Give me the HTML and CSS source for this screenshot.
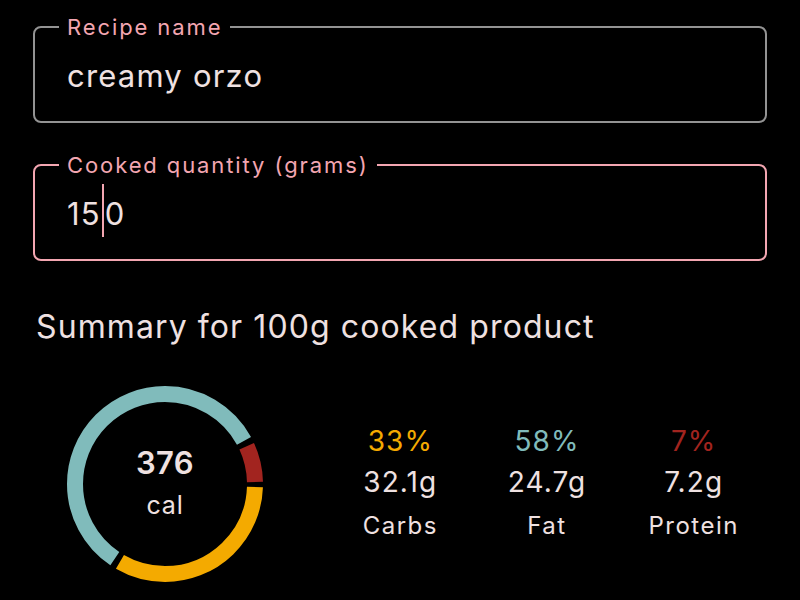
FILE: index.html
```html
<!DOCTYPE html>
<html lang="en">
<head>
    <meta charset="UTF-8">
    <meta name="viewport" content="width=device-width, initial-scale=1.0">
    <title>Recipe</title>
    <link rel="stylesheet" href="styles.css">
</head>
<body>
    <div class="page">
        <fieldset class="field">
            <legend>Recipe name</legend>
            <div class="value">creamy orzo</div>
        </fieldset>

        <fieldset class="field focused">
            <legend>Cooked quantity (grams)</legend>
            <div class="value">15<span class="caret"></span>0</div>
        </fieldset>

        <h2 class="summary-title">Summary for 100g cooked product</h2>

        <div class="summary">
            <div class="chart">
                <svg width="200" height="200" viewBox="0 0 200 200">
                    <circle class="slice carbs" cx="100" cy="100" r="90" stroke-dasharray="185.3 600" stroke-dashoffset="-3"></circle>
                    <circle class="slice fat" cx="100" cy="100" r="90" stroke-dasharray="325.3 600" stroke-dashoffset="-194.3"></circle>
                    <circle class="slice protein" cx="100" cy="100" r="90" stroke-dasharray="36.9 600" stroke-dashoffset="-525.6"></circle>
                </svg>
                <div class="calories">
                    <div class="cal-number">376</div>
                    <div class="cal-unit">cal</div>
                </div>
            </div>

            <div class="macros">
                <div class="macro">
                    <div class="percent carbs-text">33%</div>
                    <div class="grams">32.1g</div>
                    <div class="macro-name">Carbs</div>
                </div>
                <div class="macro">
                    <div class="percent fat-text">58%</div>
                    <div class="grams">24.7g</div>
                    <div class="macro-name">Fat</div>
                </div>
                <div class="macro">
                    <div class="percent protein-text">7%</div>
                    <div class="grams">7.2g</div>
                    <div class="macro-name">Protein</div>
                </div>
            </div>
        </div>
    </div>
</body>
</html>
```

FILE: styles.css
```css
body {
    margin: 0;
    background-color: #000;
    color: #efe1e1;
    font-family: Inter, "Noto Sans", sans-serif;
}

.page {
    padding: 14px 33px 0;
}

.field {
    margin: 0;
    padding: 0 24px 25px;
    border: 2px solid #939393;
    border-radius: 8px;
}

.field + .field {
    margin-top: 29px;
}

.field legend {
    padding: 0 8px;
    font-size: 22px;
    line-height: 26px;
    letter-spacing: 1.9px;
    color: #f3a6b1;
}

.field.focused {
    border-color: #f3a6b1;
}

.value {
    margin-top: 16px;
    padding-left: 8px;
    font-size: 31px;
    line-height: 40px;
    letter-spacing: 1.2px;
}

.caret {
    display: inline-block;
    width: 2px;
    height: 53px;
    margin: -12px 1px;
    background-color: #f3a6b1;
}

.summary-title {
    margin: 47px 0 0 3px;
    font-size: 32px;
    font-weight: 400;
    line-height: 38px;
    letter-spacing: 1.1px;
}

.summary {
    display: flex;
    align-items: center;
    margin-top: 38px;
}

.chart {
    display: grid;
    width: 294px;
}

.chart svg,
.calories {
    grid-area: 1 / 1;
}

.chart svg {
    margin-left: 32px;
}

.slice {
    fill: none;
    stroke-width: 16;
}

.carbs { stroke: #f4aa00; }
.fat { stroke: #80bbbb; }
.protein { stroke: #a2241f; }

.calories {
    width: 200px;
    margin-left: 32px;
    align-self: center;
    text-align: center;
}

.cal-number {
    font-size: 31px;
    font-weight: 600;
    line-height: 40px;
    letter-spacing: 0.4px;
}

.cal-unit {
    margin-top: 2px;
    font-size: 25px;
    line-height: 40px;
    letter-spacing: 0.8px;
}

.macros {
    flex: 1;
    display: grid;
    grid-template-columns: repeat(3, 1fr);
    text-align: center;
}

.percent,
.grams {
    font-size: 28px;
    line-height: 41px;
    letter-spacing: 1.1px;
}

.macro-name {
    margin-top: 1px;
    font-size: 24px;
    line-height: 43px;
    letter-spacing: 1.5px;
}

.carbs-text { color: #f4aa00; }
.fat-text { color: #80bbbb; }
.protein-text { color: #a2241f; }
```
